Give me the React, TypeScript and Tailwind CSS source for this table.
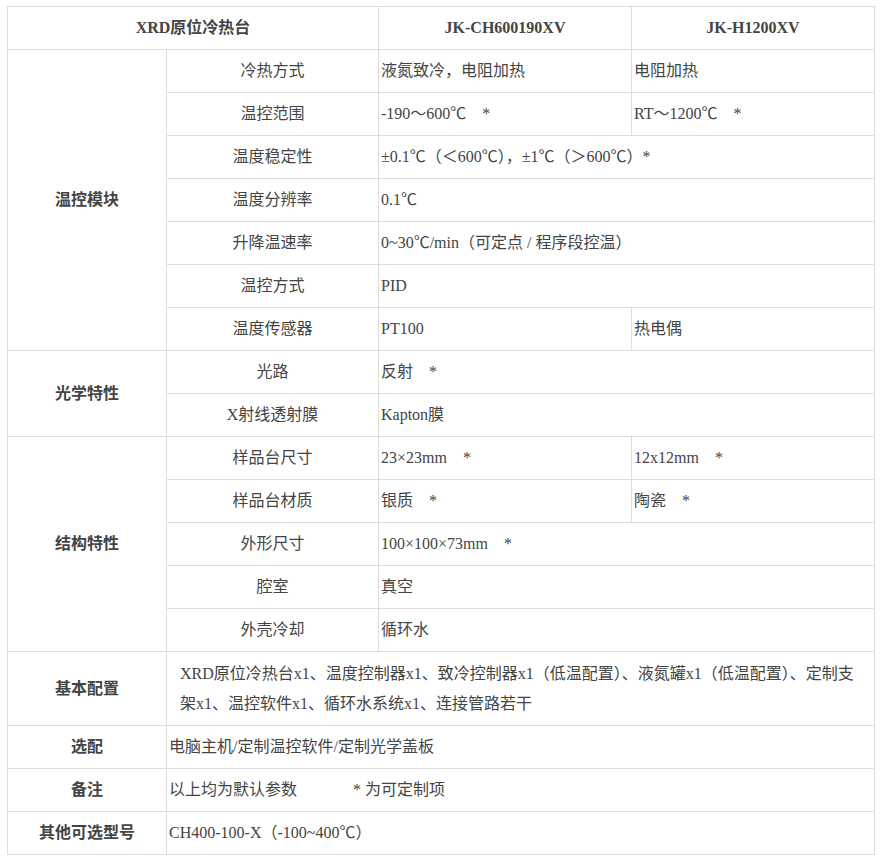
import React from "react";

const font = "font-['Liberation_Serif','Noto_Sans_CJK_SC',serif]";
const td = "border border-[#dddddd] h-[43px] p-0 align-middle";
const label = `${td} text-center`;
const val = `${td} text-left pl-[2px]`;

type Row = { label: string; a: string; b?: string };

const groups: { name: string; rows: Row[] }[] = [
  {
    name: "温控模块",
    rows: [
      { label: "冷热方式", a: "液氮致冷，电阻加热", b: "电阻加热" },
      { label: "温控范围", a: "-190～600℃　*", b: "RT～1200℃　*" },
      { label: "温度稳定性", a: "±0.1℃（＜600℃），±1℃（＞600℃）*" },
      { label: "温度分辨率", a: "0.1℃" },
      { label: "升降温速率", a: "0~30℃/min（可定点 / 程序段控温）" },
      { label: "温控方式", a: "PID" },
      { label: "温度传感器", a: "PT100", b: "热电偶" },
    ],
  },
  {
    name: "光学特性",
    rows: [
      { label: "光路", a: "反射　*" },
      { label: "X射线透射膜", a: "Kapton膜" },
    ],
  },
  {
    name: "结构特性",
    rows: [
      { label: "样品台尺寸", a: "23×23mm　*", b: "12x12mm　*" },
      { label: "样品台材质", a: "银质　*", b: "陶瓷　*" },
      { label: "外形尺寸", a: "100×100×73mm　*" },
      { label: "腔室", a: "真空" },
      { label: "外壳冷却", a: "循环水" },
    ],
  },
];

export default function App() {
  return (
    <div className={`bg-white w-[885px] h-[865px] pt-[6px] pl-[7px] ${font} text-[16px] text-[#444]`}>
      <table className="table-fixed border-collapse w-[867px]">
        <colgroup>
          <col className="w-[159px]" />
          <col className="w-[212px]" />
          <col className="w-[253px]" />
          <col className="w-[243px]" />
        </colgroup>
        <tbody>
          <tr>
            <td colSpan={2} className={`${label} font-bold`}>XRD原位冷热台</td>
            <td className={`${label} font-bold`}>JK-CH600190XV</td>
            <td className={`${label} font-bold`}>JK-H1200XV</td>
          </tr>
          {groups.map((g) =>
            g.rows.map((r, i) => (
              <tr key={g.name + i}>
                {i === 0 && (
                  <td rowSpan={g.rows.length} className={`${label} font-bold`}>
                    {g.name}
                  </td>
                )}
                <td className={label}>{r.label}</td>
                {r.b !== undefined ? (
                  <>
                    <td className={val}>{r.a}</td>
                    <td className={val}>{r.b}</td>
                  </>
                ) : (
                  <td colSpan={2} className={val}>{r.a}</td>
                )}
              </tr>
            ))
          )}
          <tr>
            <td className={`${label} font-bold h-[74px]`}>基本配置</td>
            <td colSpan={3} className={`${td} h-[74px] text-left pl-[13px] leading-[30px]`}>
              XRD原位冷热台x1、温度控制器x1、致冷控制器x1（低温配置）、液氮罐x1（低温配置）、定制支
              <br />
              架x1、温控软件x1、循环水系统x1、连接管路若干
            </td>
          </tr>
          <tr>
            <td className={`${label} font-bold`}>选配</td>
            <td colSpan={3} className={val}>电脑主机/定制温控软件/定制光学盖板</td>
          </tr>
          <tr>
            <td className={`${label} font-bold`}>备注</td>
            <td colSpan={3} className={`${val} whitespace-pre`}>以上均为默认参数　　　  * 为可定制项</td>
          </tr>
          <tr>
            <td className={`${label} font-bold`}>其他可选型号</td>
            <td colSpan={3} className={val}>CH400-100-X（-100~400℃）</td>
          </tr>
        </tbody>
      </table>
    </div>
  );
}
